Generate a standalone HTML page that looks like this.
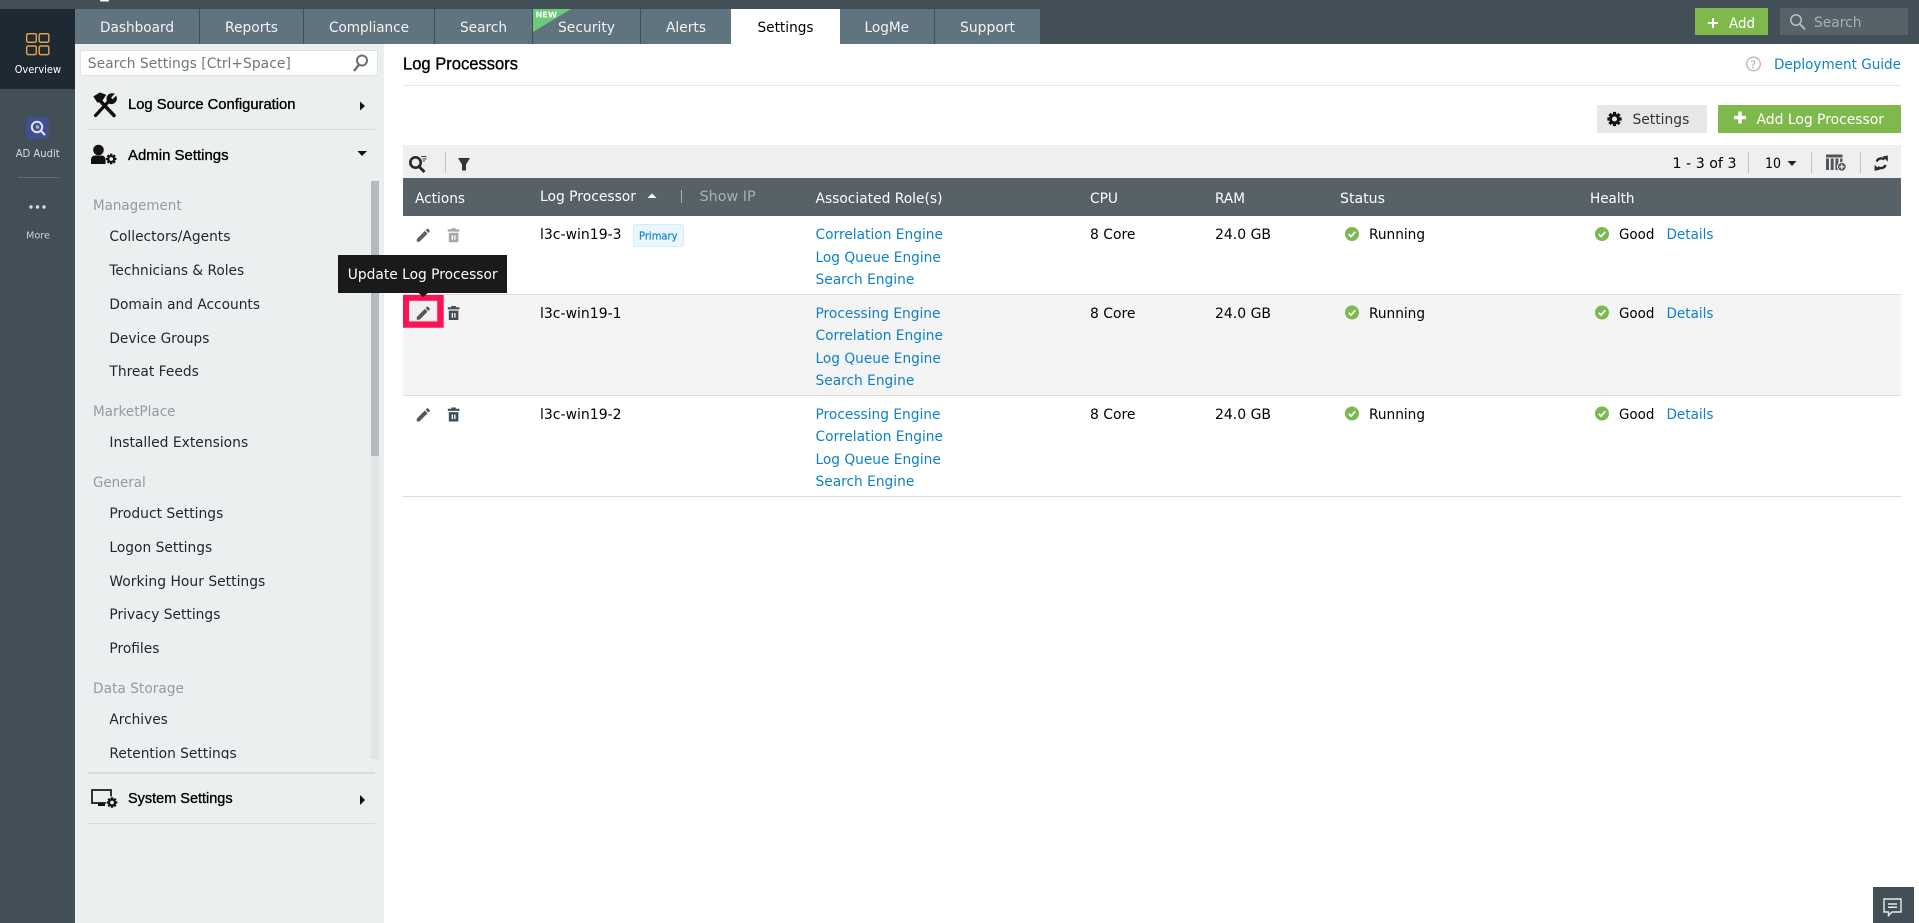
<!DOCTYPE html>
<html lang="en"><head><meta charset="utf-8"><title>Log Processors</title>
<style>
html,body{margin:0;padding:0;width:1919px;height:923px;overflow:hidden;background:#fff}
svg{display:block}
text{font-family:"DejaVu Sans","Liberation Sans",sans-serif;font-size:14px;fill:#000;white-space:pre}
.tab{fill:#f1f4f5}.act{fill:#000}
.nav{fill:#22272b}.grp{fill:#949a9e}
.h{font-family:"Liberation Sans",sans-serif;font-size:15px;fill:#000;stroke:#000;stroke-width:.35px}
.th{fill:#fff}
.a{fill:#0f81c6}
.r{font-size:10.5px}
</style></head><body>
<svg width="1919" height="923" viewBox="0 0 1919 923" xmlns="http://www.w3.org/2000/svg">
<defs>
<g id="gear"><circle r="3.4" fill="none" stroke="currentColor" stroke-width="2.4"/><g fill="currentColor"><rect x="-1.4" y="-6.2" width="2.8" height="2.6"/><rect x="-1.4" y="3.6" width="2.8" height="2.6"/><rect x="-6.2" y="-1.4" width="2.6" height="2.8"/><rect x="3.6" y="-1.4" width="2.6" height="2.8"/><g transform="rotate(45)"><rect x="-1.4" y="-6.2" width="2.8" height="2.6"/><rect x="-1.4" y="3.6" width="2.8" height="2.6"/><rect x="-6.2" y="-1.4" width="2.6" height="2.8"/><rect x="3.6" y="-1.4" width="2.6" height="2.8"/></g></g></g>
<path id="pen" d="M3 17.25V21h3.75L17.81 9.94l-3.75-3.75L3 17.25zM20.71 7.04a1 1 0 0 0 0-1.41l-2.34-2.34a1 1 0 0 0-1.41 0l-1.83 1.83 3.75 3.75 1.83-1.83z"/>
<g id="trash"><path fill="currentColor" fill-rule="evenodd" d="M3.5 0H8V1.2H11.6V3.4H0V1.2H3.5ZM1 4.6H10.6V14H1ZM3.9 7V11.6H5.2V7ZM6.4 7V11.6H7.7V7Z"/></g>
<g id="ok"><circle r="7" fill="#7cb951"/><path d="M-3.2 .2L-1 2.6 3.3-2.2" fill="none" stroke="#fff" stroke-width="1.7"/></g>
</defs>

<!-- top bar -->
<rect width="1919" height="44" fill="#434f57"/>
<rect x="100" y="0" width="9" height="1.5" rx=".7" fill="#fff"/>
<g fill="#60747f">
<rect x="75" y="9" width="124" height="35"/><rect x="200" y="9" width="103" height="35"/><rect x="304" y="9" width="130" height="35"/><rect x="435" y="9" width="97" height="35"/><rect x="533" y="9" width="107" height="35"/><rect x="641" y="9" width="90" height="35"/><rect x="840" y="9" width="94" height="35"/><rect x="935" y="9" width="105" height="35"/>
</g>
<rect x="731" y="9" width="109" height="35" fill="#fff"/>
<text class="tab" x="100" y="32" textLength="74" lengthAdjust="spacingAndGlyphs">Dashboard</text>
<text class="tab" x="225" y="32" textLength="53" lengthAdjust="spacingAndGlyphs">Reports</text>
<text class="tab" x="329" y="32" textLength="80" lengthAdjust="spacingAndGlyphs">Compliance</text>
<text class="tab" x="460" y="32" textLength="47" lengthAdjust="spacingAndGlyphs">Search</text>
<path d="M533 9H571L533 32Z" fill="#6ccb7a"/>
<text x="535.5" y="17.5" textLength="21.5" lengthAdjust="spacingAndGlyphs" style="font-size:8px;font-weight:700;fill:#fff">NEW</text>
<text class="tab" x="558" y="32" textLength="57" lengthAdjust="spacingAndGlyphs">Security</text>
<text class="tab" x="666" y="32" textLength="40" lengthAdjust="spacingAndGlyphs">Alerts</text>
<text class="act" x="757.5" y="32" textLength="56" lengthAdjust="spacingAndGlyphs">Settings</text>
<text class="tab" x="864.5" y="32" textLength="44.5" lengthAdjust="spacingAndGlyphs">LogMe</text>
<text class="tab" x="960" y="32" textLength="55" lengthAdjust="spacingAndGlyphs">Support</text>

<rect x="1695" y="8" width="73" height="27" fill="#7fb94b"/>
<path d="M1708 23H1718M1713 18V28" stroke="#fff" stroke-width="2"/>
<text x="1729" y="28" textLength="26" lengthAdjust="spacingAndGlyphs" style="fill:#fff">Add</text>
<rect x="1780" y="8" width="128" height="27" fill="#566168"/>
<circle cx="1796" cy="20" r="5.2" fill="none" stroke="#b3bbc0" stroke-width="1.6"/><path d="M1799.8 24L1805 29.5" stroke="#b3bbc0" stroke-width="2"/>
<text x="1814" y="27" textLength="47.5" lengthAdjust="spacingAndGlyphs" style="fill:#a8b0b5">Search</text>

<!-- rail -->
<rect y="44" width="75" height="879" fill="#434f57"/>
<rect y="9" width="75" height="80" fill="#1f2933"/>
<g fill="none" stroke="#d99f4c" stroke-width="1.5">
<rect x="26.7" y="33.7" width="9.6" height="8.6" rx="1.5"/><rect x="39.2" y="33.7" width="9.6" height="8.6" rx="1.5"/><rect x="26.7" y="46" width="9.6" height="8.6" rx="1.5"/><rect x="39.2" y="46" width="9.6" height="8.6" rx="1.5"/>
</g>
<text x="14.7" y="73" textLength="46.3" lengthAdjust="spacingAndGlyphs" style="font-size:10.5px;fill:#fff">Overview</text>
<rect x="26" y="117" width="23" height="22" rx="2.5" fill="#3f4f90"/>
<circle cx="37" cy="127" r="5.2" fill="#3f4f90" stroke="#e4e7ee" stroke-width="2"/><circle cx="37.5" cy="127" r="1.8" fill="#aab3d4"/><path d="M41 131L45 135" stroke="#e4e7ee" stroke-width="2.2"/>
<text x="15.7" y="157" textLength="44" lengthAdjust="spacingAndGlyphs" style="font-size:10.5px;fill:#d6dde1">AD Audit</text>
<rect x="18" y="177" width="41" height="1" fill="#5f6b73"/>
<circle cx="31" cy="207" r="1.7" fill="#d6dde1"/><circle cx="37.5" cy="207" r="1.7" fill="#d6dde1"/><circle cx="44" cy="207" r="1.7" fill="#d6dde1"/>
<text x="26" y="238.5" textLength="24" lengthAdjust="spacingAndGlyphs" style="font-size:10px;fill:#c8d0d5">More</text>

<!-- settings sidebar -->
<rect x="75" y="44" width="309" height="879" fill="#ebeff0"/>
<rect x="80.5" y="50.5" width="297" height="25" fill="#fff" stroke="#e0e3e4"/>
<text x="87.8" y="68" textLength="203" lengthAdjust="spacingAndGlyphs" style="fill:#70777c">Search Settings [Ctrl+Space]</text>
<circle cx="362" cy="60.5" r="5" fill="none" stroke="#6b6f72" stroke-width="2"/><path d="M358.7 65L354 71" stroke="#6b6f72" stroke-width="2.4"/>

<!-- tools icon -->
<g fill="none" stroke="#111" stroke-linecap="round">
<path d="M95.5 115.5L110 100" stroke-width="3.2"/>
<path d="M98 98.5L114 115.5" stroke-width="3.6"/>
<path d="M94 96.5L100 93 105.5 95 101.5 101 97.5 102Z" fill="#111" stroke-width="1"/>
<path d="M108 102A5.2 5.2 0 0 1 114 94L110.5 97.5 112.5 100 116 96.5A5.2 5.2 0 0 1 110 103.5Z" fill="#111" stroke-width="1"/>
</g>
<text class="h" x="128" y="109" textLength="167.5" lengthAdjust="spacingAndGlyphs">Log Source Configuration</text>
<path d="M360 101.5L365 106 360 110.5Z" fill="#111"/>
<rect x="88" y="129" width="287" height="1" fill="#d9dcdd"/>

<!-- admin icon -->
<circle cx="98.5" cy="150" r="5.3" fill="#111"/><path d="M91 164V159.5Q91 156 95 155.5H102Q105 156 105.5 159V164Z" fill="#111"/>
<use href="#gear" color="#111" transform="translate(111.2 159) scale(.85)"/>
<text class="h" x="128" y="160" textLength="100.6" lengthAdjust="spacingAndGlyphs">Admin Settings</text>
<path d="M357.5 151H367L362 156Z" fill="#111"/>

<text class="grp" x="93" y="210" textLength="88.6" lengthAdjust="spacingAndGlyphs">Management</text>
<text class="nav" x="109.4" y="241" textLength="121" lengthAdjust="spacingAndGlyphs">Collectors/Agents</text>
<text class="nav" x="109.4" y="275" textLength="134.7" lengthAdjust="spacingAndGlyphs">Technicians &amp; Roles</text>
<text class="nav" x="109.4" y="309" textLength="150.6" lengthAdjust="spacingAndGlyphs">Domain and Accounts</text>
<text class="nav" x="109.4" y="343" textLength="100" lengthAdjust="spacingAndGlyphs">Device Groups</text>
<text class="nav" x="109.4" y="376" textLength="89.4" lengthAdjust="spacingAndGlyphs">Threat Feeds</text>
<text class="grp" x="93" y="416" textLength="82.5" lengthAdjust="spacingAndGlyphs">MarketPlace</text>
<text class="nav" x="109.4" y="447" textLength="138.8" lengthAdjust="spacingAndGlyphs">Installed Extensions</text>
<text class="grp" x="93" y="487" textLength="52.7" lengthAdjust="spacingAndGlyphs">General</text>
<text class="nav" x="109.4" y="518" textLength="113.9" lengthAdjust="spacingAndGlyphs">Product Settings</text>
<text class="nav" x="109.4" y="552" textLength="102.8" lengthAdjust="spacingAndGlyphs">Logon Settings</text>
<text class="nav" x="109.4" y="586" textLength="155.9" lengthAdjust="spacingAndGlyphs">Working Hour Settings</text>
<text class="nav" x="109.4" y="619" textLength="111" lengthAdjust="spacingAndGlyphs">Privacy Settings</text>
<text class="nav" x="109.4" y="653" textLength="50" lengthAdjust="spacingAndGlyphs">Profiles</text>
<text class="grp" x="93" y="693" textLength="91" lengthAdjust="spacingAndGlyphs">Data Storage</text>
<text class="nav" x="109.4" y="724" textLength="58.4" lengthAdjust="spacingAndGlyphs">Archives</text>
<text class="nav" x="109.4" y="758" textLength="127.3" lengthAdjust="spacingAndGlyphs">Retention Settings</text>
<rect x="88" y="759" width="283" height="8" fill="#ebeff0"/>
<rect x="371" y="181" width="8" height="578" fill="#e2e5e5"/>
<rect x="371" y="181" width="8" height="275" fill="#b3b9bc"/>
<rect x="88" y="772" width="287" height="2" fill="#d9dcdd"/>
<!-- system icon -->
<rect x="92" y="790" width="19" height="13" fill="none" stroke="#111" stroke-width="1.7"/><rect x="98" y="803" width="7" height="3" fill="#111"/>
<circle cx="112" cy="802.5" r="6.2" fill="#ebeff0"/>
<use href="#gear" color="#111" transform="translate(112 802.5) scale(.85)"/>
<text class="h" x="128" y="803" textLength="104.6" lengthAdjust="spacingAndGlyphs">System Settings</text>
<path d="M360 795L365 800 360 805Z" fill="#111"/>
<rect x="88" y="823" width="287" height="1" fill="#d9dcdd"/>

<!-- page header -->
<text x="403" y="69.5" textLength="115" lengthAdjust="spacingAndGlyphs" style="font-family:'Liberation Sans',sans-serif;font-size:17.5px;fill:#000;stroke:#000;stroke-width:.35px">Log Processors</text>
<rect x="403" y="85" width="1498" height="1" fill="#e6e6e6"/>
<circle cx="1753.5" cy="64" r="6.8" fill="none" stroke="#b5b8ba" stroke-width="1.3"/>
<text x="1750.2" y="68.5" style="font-size:11px;fill:#a8abad">?</text>
<text class="a" x="1774" y="69" textLength="127" lengthAdjust="spacingAndGlyphs">Deployment Guide</text>

<rect x="1597" y="105" width="110" height="28" fill="#e6e8e8"/>
<use href="#gear" color="#111" transform="translate(1614.5 119) scale(1.15)"/>
<text x="1632.5" y="124" textLength="56.8" lengthAdjust="spacingAndGlyphs" style="fill:#333">Settings</text>
<rect x="1718" y="105" width="183" height="28" fill="#7fb94b"/>
<path d="M1734 117.5H1746M1740 111.5V123.5" stroke="#fff" stroke-width="3.4"/>
<text x="1756.5" y="124" textLength="127.5" lengthAdjust="spacingAndGlyphs" style="fill:#fff">Add Log Processor</text>

<!-- toolbar -->
<rect x="403" y="145" width="1498" height="33" fill="#efefef"/>
<circle cx="415.5" cy="162.5" r="5.2" fill="none" stroke="#2a2a2a" stroke-width="2.6"/><path d="M419.5 167L424.5 172" stroke="#2a2a2a" stroke-width="3"/>
<path d="M421 156.5H426.5M422.5 158.8H426.5M422.5 161H425" stroke="#444" stroke-width="1.1"/>
<rect x="445" y="152" width="1" height="21" fill="#bfc2c4"/>
<path d="M458 158H470L466 164.5V170.5H462V164.5Z" fill="#333"/>
<text x="1672.5" y="168" textLength="64" lengthAdjust="spacingAndGlyphs">1 - 3 of 3</text>
<rect x="1748" y="152" width="1" height="21" fill="#bfc2c4"/>
<text x="1765" y="168" textLength="16" lengthAdjust="spacingAndGlyphs">10</text>
<path d="M1787.5 161H1796.5L1792 166Z" fill="#222"/>
<rect x="1811" y="152" width="1" height="21" fill="#bfc2c4"/>
<g fill="#50585e"><rect x="1826" y="154.5" width="16.5" height="3"/><rect x="1826" y="158.5" width="3" height="11.5"/><rect x="1830.7" y="158.5" width="3" height="11.5"/><rect x="1835.4" y="158.5" width="3" height="11.5"/><rect x="1840.1" y="158.5" width="2.4" height="6"/></g>
<circle cx="1841.8" cy="166.8" r="4.4" fill="#50585e" stroke="#efefef"/><path d="M1839.3 166.8H1844.3M1841.8 164.3V169.3" stroke="#fff" stroke-width="1.2"/>
<rect x="1860" y="152" width="1" height="21" fill="#bfc2c4"/>
<g fill="none" stroke="#2a2a2a" stroke-width="2.4"><path d="M1876.6 161.5A5 5 0 0 1 1884.4 159.5"/><path d="M1885.6 165A5 5 0 0 1 1877.8 167"/></g>
<path d="M1882.5 156.5L1887.8 155.5V161.5ZM1880 169.8L1874.6 170.8V164.8Z" fill="#2a2a2a"/>

<!-- table header -->
<rect x="403" y="178" width="1498" height="38" fill="#566168"/>
<text class="th" x="415" y="203" textLength="50" lengthAdjust="spacingAndGlyphs">Actions</text>
<text class="th" x="540" y="201" textLength="96" lengthAdjust="spacingAndGlyphs">Log Processor</text>
<path d="M647.5 198H656.5L652 193.5Z" fill="#fff"/>
<rect x="681" y="190" width="1" height="13" fill="#aab1b6"/>
<text x="699.6" y="201" textLength="56" lengthAdjust="spacingAndGlyphs" style="fill:#aab1b6">Show IP</text>
<text class="th" x="815.5" y="203" textLength="127" lengthAdjust="spacingAndGlyphs">Associated Role(s)</text>
<text class="th" x="1090" y="203" textLength="28" lengthAdjust="spacingAndGlyphs">CPU</text>
<text class="th" x="1215" y="203" textLength="30" lengthAdjust="spacingAndGlyphs">RAM</text>
<text class="th" x="1340" y="203" textLength="45" lengthAdjust="spacingAndGlyphs">Status</text>
<text class="th" x="1590" y="203" textLength="44.5" lengthAdjust="spacingAndGlyphs">Health</text>

<!-- rows -->
<rect x="403" y="295" width="1498" height="100" fill="#f4f4f4"/>
<rect x="403" y="294" width="1498" height="1" fill="#dcdcdc"/>
<rect x="403" y="395" width="1498" height="1" fill="#dcdcdc"/>
<rect x="403" y="496" width="1498" height="1" fill="#dcdcdc"/>

<!-- row 1 -->
<use href="#pen" fill="#5a6268" transform="translate(414.6 226.4) scale(.73)"/>
<use href="#trash" color="#a3a8ac" x="447.8" y="228.2"/>
<text x="540" y="239" textLength="81.6" lengthAdjust="spacingAndGlyphs">l3c-win19-3</text>
<rect x="633.5" y="224.5" width="50" height="22" rx="2" fill="#e9f6fd" stroke="#d6ecf7"/>
<text class="r" x="639" y="239.5" textLength="38.5" lengthAdjust="spacingAndGlyphs" style="fill:#1486c8;stroke:#1486c8;stroke-width:.2px">Primary</text>
<text class="a" x="815.5" y="239" textLength="127.5" lengthAdjust="spacingAndGlyphs">Correlation Engine</text>
<text class="a" x="815.5" y="262" textLength="125.3" lengthAdjust="spacingAndGlyphs">Log Queue Engine</text>
<text class="a" x="815.5" y="284" textLength="98.8" lengthAdjust="spacingAndGlyphs">Search Engine</text>
<text x="1090" y="239" textLength="45.5" lengthAdjust="spacingAndGlyphs">8 Core</text>
<text x="1215" y="239" textLength="56" lengthAdjust="spacingAndGlyphs">24.0 GB</text>
<use href="#ok" x="1352" y="234"/>
<text x="1369" y="239" textLength="56" lengthAdjust="spacingAndGlyphs">Running</text>
<use href="#ok" x="1602" y="234"/>
<text x="1619" y="239" textLength="35.4" lengthAdjust="spacingAndGlyphs">Good</text>
<text class="a" x="1666.5" y="239" textLength="47" lengthAdjust="spacingAndGlyphs">Details</text>

<!-- row 2 -->
<rect x="409" y="300.5" width="28" height="20.5" fill="#f0f0f0" stroke="#d8d8d8"/>
<use href="#pen" fill="#4f575d" transform="translate(414.6 304.4) scale(.73)"/>
<use href="#trash" color="#434f57" x="447.8" y="306"/>
<text x="540" y="318" textLength="81.6" lengthAdjust="spacingAndGlyphs">l3c-win19-1</text>
<text class="a" x="815.5" y="318" textLength="125" lengthAdjust="spacingAndGlyphs">Processing Engine</text>
<text class="a" x="815.5" y="340" textLength="127.5" lengthAdjust="spacingAndGlyphs">Correlation Engine</text>
<text class="a" x="815.5" y="363" textLength="125.3" lengthAdjust="spacingAndGlyphs">Log Queue Engine</text>
<text class="a" x="815.5" y="385" textLength="98.8" lengthAdjust="spacingAndGlyphs">Search Engine</text>
<text x="1090" y="318" textLength="45.5" lengthAdjust="spacingAndGlyphs">8 Core</text>
<text x="1215" y="318" textLength="56" lengthAdjust="spacingAndGlyphs">24.0 GB</text>
<use href="#ok" x="1352" y="312.5"/>
<text x="1369" y="318" textLength="56" lengthAdjust="spacingAndGlyphs">Running</text>
<use href="#ok" x="1602" y="312.5"/>
<text x="1619" y="318" textLength="35.4" lengthAdjust="spacingAndGlyphs">Good</text>
<text class="a" x="1666.5" y="318" textLength="47" lengthAdjust="spacingAndGlyphs">Details</text>

<!-- row 3 -->
<use href="#pen" fill="#4f575d" transform="translate(414.6 406) scale(.73)"/>
<use href="#trash" color="#434f57" x="447.8" y="407.5"/>
<text x="540" y="419" textLength="81.6" lengthAdjust="spacingAndGlyphs">l3c-win19-2</text>
<text class="a" x="815.5" y="419" textLength="125" lengthAdjust="spacingAndGlyphs">Processing Engine</text>
<text class="a" x="815.5" y="441" textLength="127.5" lengthAdjust="spacingAndGlyphs">Correlation Engine</text>
<text class="a" x="815.5" y="464" textLength="125.3" lengthAdjust="spacingAndGlyphs">Log Queue Engine</text>
<text class="a" x="815.5" y="486" textLength="98.8" lengthAdjust="spacingAndGlyphs">Search Engine</text>
<text x="1090" y="419" textLength="45.5" lengthAdjust="spacingAndGlyphs">8 Core</text>
<text x="1215" y="419" textLength="56" lengthAdjust="spacingAndGlyphs">24.0 GB</text>
<use href="#ok" x="1352" y="413.5"/>
<text x="1369" y="419" textLength="56" lengthAdjust="spacingAndGlyphs">Running</text>
<use href="#ok" x="1602" y="413.5"/>
<text x="1619" y="419" textLength="35.4" lengthAdjust="spacingAndGlyphs">Good</text>
<text class="a" x="1666.5" y="419" textLength="47" lengthAdjust="spacingAndGlyphs">Details</text>

<!-- highlight + tooltip -->
<path fill-rule="evenodd" d="M403 295H443.7V327.7H403ZM409 300.7V321.5H437.3V300.7Z" fill="#fa1456"/>
<rect x="338" y="255" width="169" height="38" fill="#1a1a1a"/>
<path d="M418.5 293H428L423 297Z" fill="#1a1a1a"/>
<text x="347.8" y="279" textLength="149.8" lengthAdjust="spacingAndGlyphs" style="fill:#fff">Update Log Processor</text>

<!-- chat -->
<rect x="1873" y="887" width="41" height="36" fill="#434f57"/>
<path d="M1884 899H1901V912H1892L1888.5 915.5V912H1884Z" fill="none" stroke="#e6eaec" stroke-width="1.4"/>
<path d="M1888 904H1897M1888 907.3H1897" stroke="#e6eaec" stroke-width="1.5"/>
</svg>
</body></html>
